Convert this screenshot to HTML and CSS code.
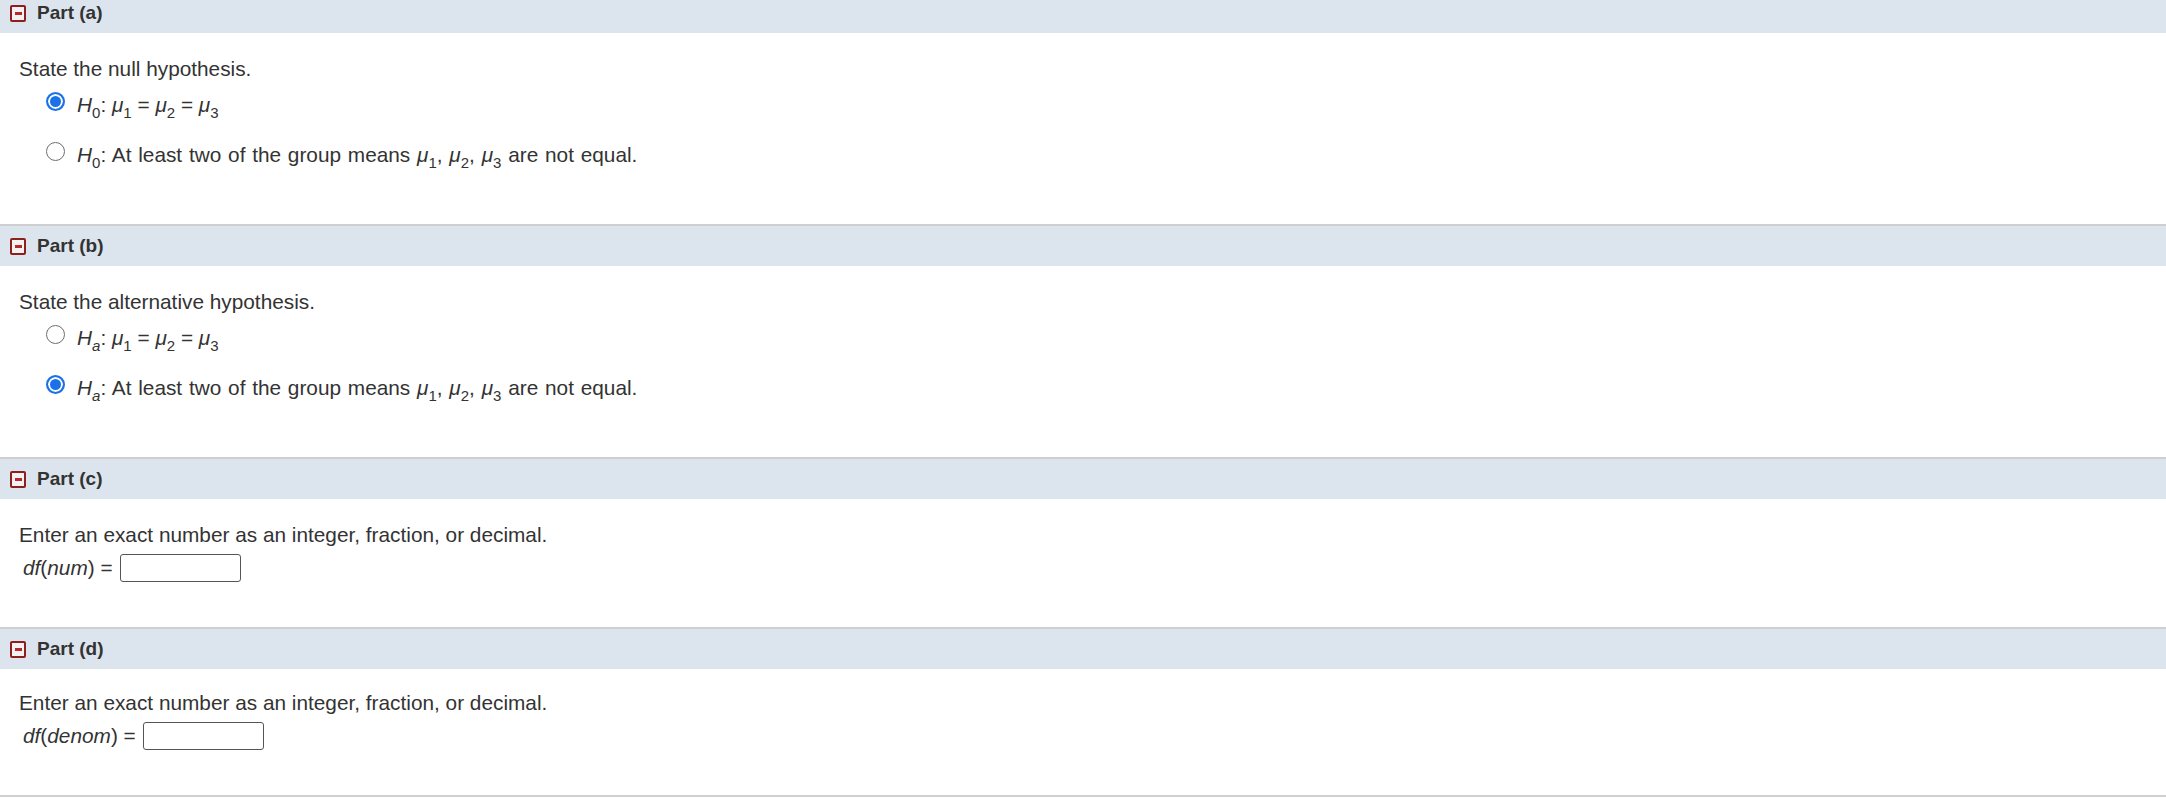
FILE: index.html
```html
<!DOCTYPE html>
<html lang="en">
<head>
<meta charset="utf-8">
<title>Parts</title>
<link rel="stylesheet" href="styles.css">
</head>
<body>
<div class="page">
  <section class="part">
    <div class="part-head"><span class="collapse"><span class="minus"></span></span>Part (a)</div>
    <div class="part-body">
      <div class="question">State the null hypothesis.</div>
      <div class="options">
        <label class="option"><input type="radio" name="a" checked><span class="opt-text"><i>H</i><span class="sub">0</span>: <i>μ</i><span class="sub">1</span> = <i>μ</i><span class="sub">2</span> = <i>μ</i><span class="sub">3</span></span></label>
        <label class="option"><input type="radio" name="a"><span class="opt-text long"><i>H</i><span class="sub">0</span>: At least two of the group means <i>μ</i><span class="sub">1</span>, <i>μ</i><span class="sub">2</span>, <i>μ</i><span class="sub">3</span> are not equal.</span></label>
      </div>
    </div>
  </section>
  <section class="part">
    <div class="part-head"><span class="collapse"><span class="minus"></span></span>Part (b)</div>
    <div class="part-body">
      <div class="question">State the alternative hypothesis.</div>
      <div class="options">
        <label class="option"><input type="radio" name="b"><span class="opt-text"><i>H</i><span class="sub"><i>a</i></span>: <i>μ</i><span class="sub">1</span> = <i>μ</i><span class="sub">2</span> = <i>μ</i><span class="sub">3</span></span></label>
        <label class="option"><input type="radio" name="b" checked><span class="opt-text long"><i>H</i><span class="sub"><i>a</i></span>: At least two of the group means <i>μ</i><span class="sub">1</span>, <i>μ</i><span class="sub">2</span>, <i>μ</i><span class="sub">3</span> are not equal.</span></label>
      </div>
    </div>
  </section>
  <section class="part">
    <div class="part-head"><span class="collapse"><span class="minus"></span></span>Part (c)</div>
    <div class="part-body short">
      <div class="question">Enter an exact number as an integer, fraction, or decimal.</div>
      <div class="answer"><span><i>df</i>(<i>num</i>) =</span><input type="text" class="field"></div>
    </div>
  </section>
  <section class="part last">
    <div class="part-head"><span class="collapse"><span class="minus"></span></span>Part (d)</div>
    <div class="part-body short tight">
      <div class="question">Enter an exact number as an integer, fraction, or decimal.</div>
      <div class="answer"><span><i>df</i>(<i>denom</i>) =</span><input type="text" class="field"></div>
    </div>
  </section>
</div>
</body>
</html>
```
FILE: styles.css
```css
html, body {
  margin: 0;
  padding: 0;
  background: #ffffff;
}

body {
  font-family: "Liberation Sans", Arial, Helvetica, sans-serif;
  color: #333333;
  overflow: hidden;
}

.page {
  margin-top: -9px;
}

.part {
  border-top: 2px solid #cfcfcf;
}

.part.last {
  border-bottom: 2px solid #cfcfcf;
}

.part-head {
  height: 40px;
  background: #dce5ee;
  display: flex;
  align-items: center;
  padding-left: 10px;
  font-size: 19px;
  font-weight: bold;
  color: #333333;
}

.collapse {
  box-sizing: border-box;
  width: 16px;
  height: 17px;
  border: 2px solid #8e1f1f;
  border-radius: 2px;
  background: #f3f1f1;
  display: flex;
  align-items: center;
  justify-content: center;
  margin-right: 11px;
}

.minus {
  width: 7px;
  height: 3px;
  background: #b8282c;
}

.part-body {
  padding: 24px 0 56px 19px;
  font-size: 20.8px;
  line-height: 24px;
}

.part-body.short {
  padding-bottom: 45px;
}

.part-body.tight {
  padding-top: 22px;
}

.options {
  margin-top: 11px;
  padding-left: 27px;
  display: flex;
  flex-direction: column;
  gap: 24px;
}

.option {
  display: flex;
  align-items: flex-start;
  gap: 12px;
  height: 26px;
}

.option input {
  -webkit-appearance: none;
  appearance: none;
  box-sizing: border-box;
  margin: 0;
  width: 19px;
  height: 19px;
  border-radius: 50%;
  border: 1.5px solid #6e6e6e;
  background: #ffffff;
  flex: none;
}

.option input:checked {
  border: 2px solid #1b72e8;
  background: #1b72e8;
  box-shadow: inset 0 0 0 2px #ffffff;
}

.opt-text {
  padding-top: 1px;
  white-space: nowrap;
}

.opt-text.long {
  word-spacing: 1px;
}

.sub {
  font-size: 15px;
  vertical-align: -6px;
  line-height: 0;
  font-style: normal;
}

.answer {
  margin-top: 7px;
  padding-left: 4px;
  display: flex;
  align-items: center;
}

.field {
  box-sizing: border-box;
  width: 121px;
  height: 28px;
  margin: 0 0 0 7px;
  border: 1px solid #555555;
  border-radius: 3px;
  background: #ffffff;
  padding: 0 4px;
  font: inherit;
}
```
